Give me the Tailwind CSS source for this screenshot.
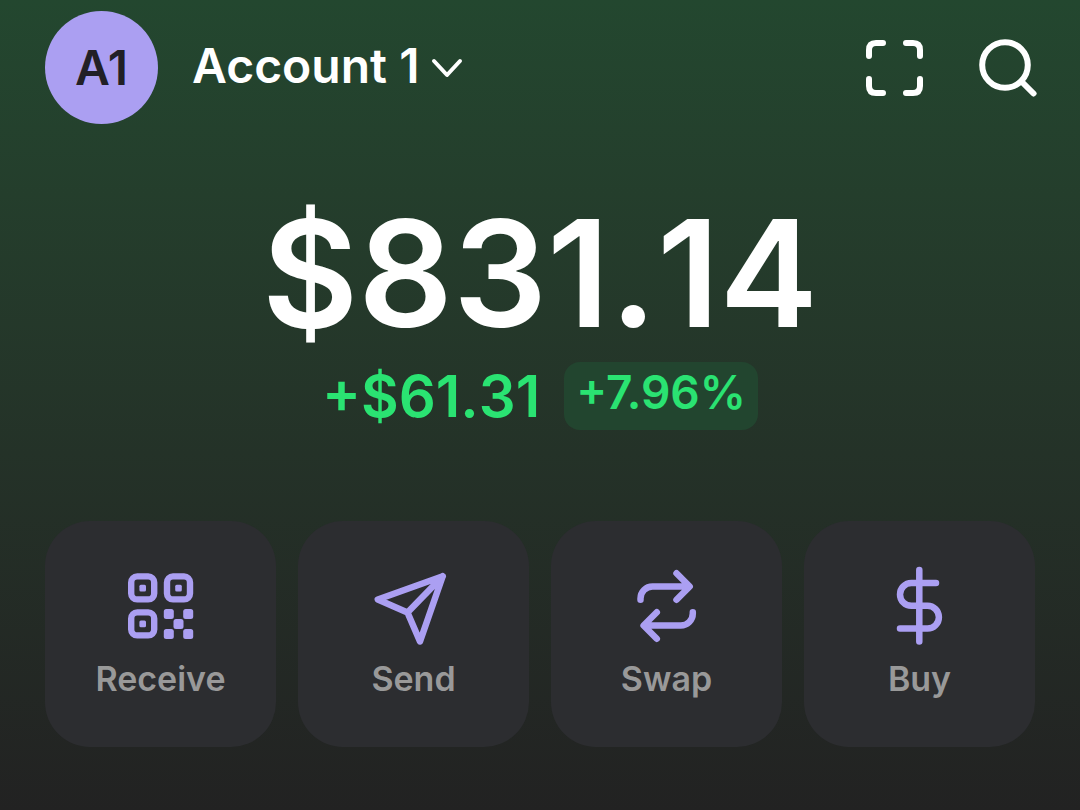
<!DOCTYPE html>
<html lang="en">
<head>
<meta charset="utf-8">
<meta name="viewport" content="width=device-width, initial-scale=1">
<title>Wallet</title>
<script src="https://cdn.jsdelivr.net/npm/@tailwindcss/browser@4"></script>
</head>
<body class="min-h-screen bg-linear-to-b from-[#23472f] to-[#222222] font-['Inter','Liberation_Sans',sans-serif] font-semibold text-white">
<main class="px-[45px] pt-[11px] pb-16">
  <header class="-mr-0.5 flex items-center justify-between">
    <div class="flex items-center gap-[34px]">
      <div class="flex size-[113px] items-center justify-center rounded-full bg-[#ab9ff2] text-[48px] leading-none text-[#222026]">A1</div>
      <button type="button" class="flex items-center gap-3 pb-1 text-[48px] leading-none">
        <span>Account 1</span>
        <svg class="mt-1 h-5 w-8" viewBox="0 0 32 20" fill="none" stroke="currentColor" stroke-width="4" stroke-linecap="round" stroke-linejoin="round" aria-hidden="true"><path d="M3 3l13 14L29 3"/></svg>
      </button>
    </div>
    <div class="flex items-center gap-14">
      <button type="button" aria-label="Scan">
        <svg class="size-[57px]" viewBox="0 0 57 57" fill="none" stroke="currentColor" stroke-width="6" stroke-linecap="round" aria-hidden="true"><path d="M3 17v-6q0-7 7-7h7M40 4h7q7 0 7 7v6M54 40v7q0 7-7 7h-7M17 54h-7q-7 0-7-7v-7"/></svg>
      </button>
      <button type="button" aria-label="Search">
        <svg class="size-[58px]" viewBox="0 0 58 58" fill="none" stroke="currentColor" stroke-width="6" stroke-linecap="round" aria-hidden="true"><circle cx="26" cy="26" r="22.8"/><path d="M42.5 42.5l12 12"/></svg>
      </button>
    </div>
  </header>

  <section class="mt-[70px] flex flex-col items-center">
    <h1 class="text-[148px] leading-[160px] [font-kerning:none]">$831.14</h1>
    <div class="mt-2 flex items-center gap-6 text-[#2ae372]">
      <span class="text-[58px] leading-[68px] [font-kerning:none]">+$61.31</span>
      <span class="rounded-[16px] bg-[#22452f] px-3 pb-2 text-[46px] leading-[60px]">+7.96%</span>
    </div>
  </section>

  <nav class="mt-[91px] grid grid-cols-4 gap-[22px] text-[34px] leading-10 text-[#999999]">
    <button type="button" class="flex flex-col items-center gap-[9px] rounded-[45px] bg-[#2c2d30] pt-[39px] pb-12">
      <svg class="h-[90px] w-[100px] text-[#ab9ff2]" viewBox="1 0 100 90" aria-hidden="true">
        <g fill="none" stroke="currentColor" stroke-width="6.4"><rect x="21.2" y="16.4" width="23" height="23" rx="6"/><rect x="57" y="16.4" width="23" height="23" rx="6"/><rect x="21.2" y="52.4" width="23" height="23" rx="6"/></g>
        <g fill="currentColor"><rect x="29.4" y="24.8" width="6.6" height="6.6" rx="1.5"/><rect x="65.2" y="24.8" width="6.6" height="6.6" rx="1.5"/><rect x="29.4" y="60.6" width="6.6" height="6.6" rx="1.5"/><rect x="53.8" y="49" width="10" height="10" rx="2.5"/><rect x="73.2" y="49" width="10" height="10" rx="2.5"/><rect x="63.5" y="59" width="10" height="10" rx="2.5"/><rect x="53.8" y="69" width="10" height="10" rx="2.5"/><rect x="73.2" y="69" width="10" height="10" rx="2.5"/></g>
      </svg>
      <span>Receive</span>
    </button>
    <button type="button" class="flex flex-col items-center gap-[9px] rounded-[45px] bg-[#2c2d30] pt-[39px] pb-12">
      <svg class="h-[90px] w-[100px] text-[#ab9ff2]" viewBox="4 0 100 90" fill="none" stroke="currentColor" stroke-width="6.5" stroke-linecap="round" stroke-linejoin="round" aria-hidden="true"><path d="M82.7 16.3L17.8 39.5L47.5 52.5L60 81.5ZM82.7 16.3L47.5 52.5"/></svg>
      <span>Send</span>
    </button>
    <button type="button" class="flex flex-col items-center gap-[9px] rounded-[45px] bg-[#2c2d30] pt-[39px] pb-12">
      <svg class="h-[90px] w-[100px] text-[#ab9ff2]" viewBox="-3 0 100 90" fill="none" stroke="currentColor" stroke-width="6.5" stroke-linecap="round" stroke-linejoin="round" aria-hidden="true"><path d="M20.5 39.7v-1.2a12 12 0 0 1 12-12H69M56.5 13.2L69.7 26.5L56.5 39.7M72.8 52.3v1.2a12 12 0 0 1-12 12H24M36.8 52.3L23.6 65.5L36.8 78.7"/></svg>
      <span>Swap</span>
    </button>
    <button type="button" class="flex flex-col items-center gap-[9px] rounded-[45px] bg-[#2c2d30] pt-[39px] pb-12">
      <svg class="h-[90px] w-[100px] text-[#ab9ff2]" viewBox="0 0 100 90" fill="none" stroke="currentColor" stroke-width="6.5" stroke-linecap="round" stroke-linejoin="round" aria-hidden="true"><path d="M49.3 10v71.5M66 23H41.4a11.4 11.4 0 0 0 0 22.8H57.5a11.4 11.4 0 0 1 0 22.8H30"/></svg>
      <span>Buy</span>
    </button>
  </nav>
</main>
</body>
</html>
